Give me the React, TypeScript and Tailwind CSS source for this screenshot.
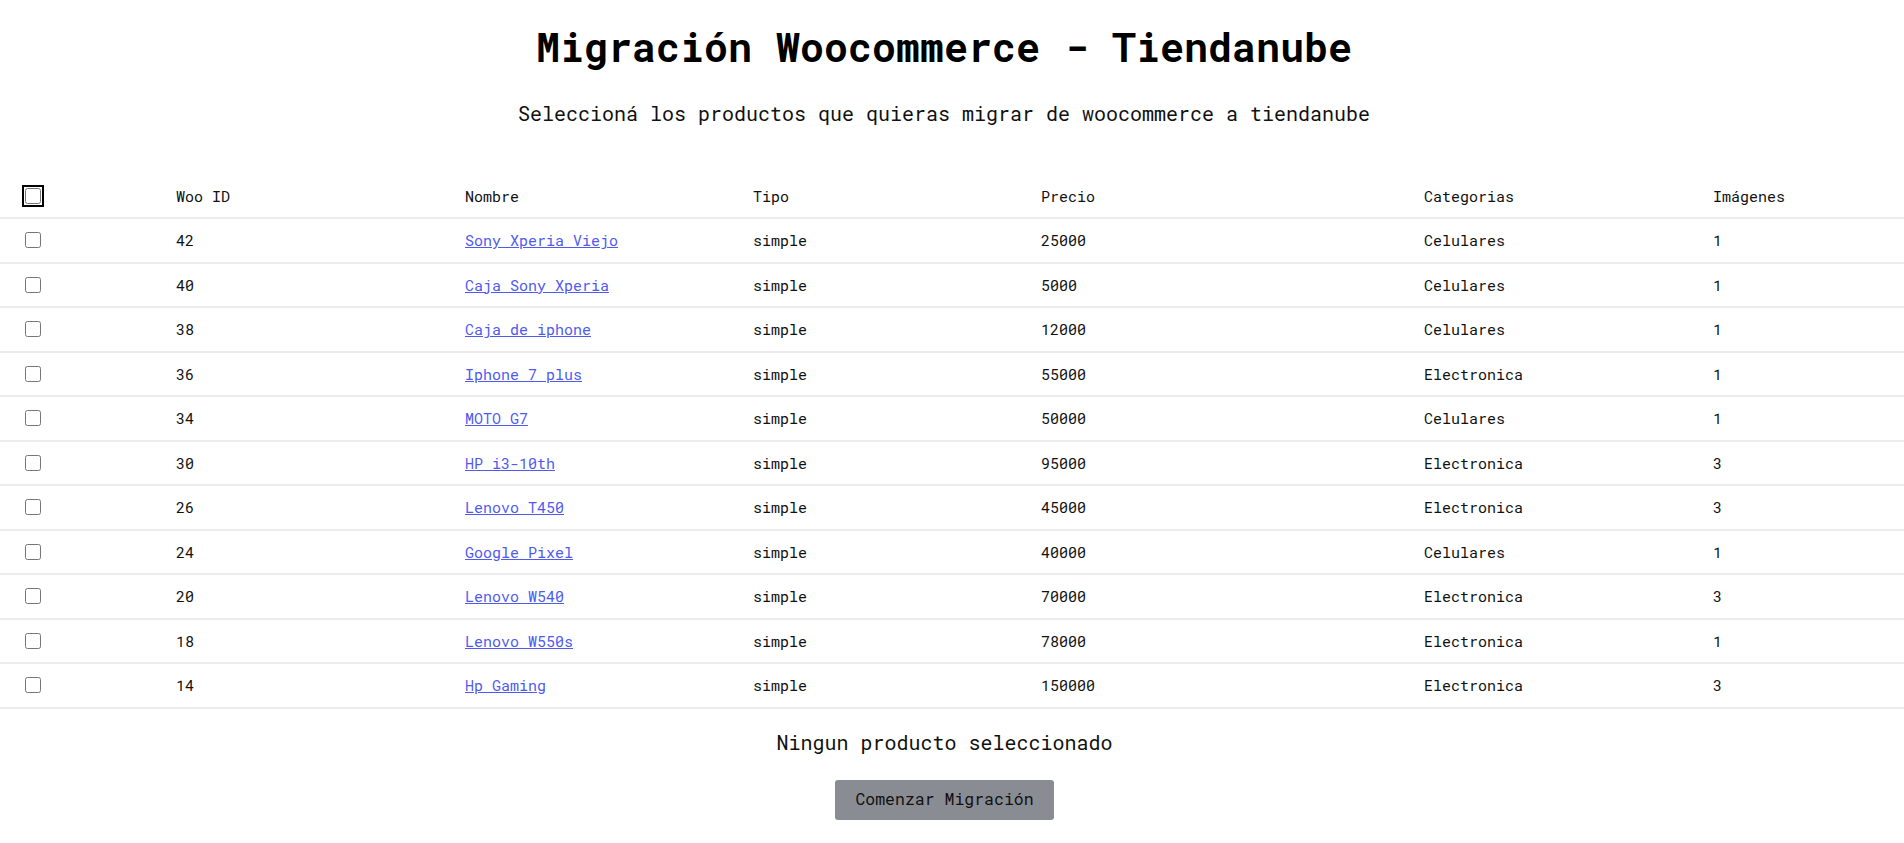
import * as React from "react";

interface Product {
  id: number;
  name: string;
  type: string;
  price: number;
  category: string;
  images: number;
}

const PRODUCTS: Product[] = [
  { id: 42, name: "Sony Xperia Viejo", type: "simple", price: 25000, category: "Celulares", images: 1 },
  { id: 40, name: "Caja Sony Xperia", type: "simple", price: 5000, category: "Celulares", images: 1 },
  { id: 38, name: "Caja de iphone", type: "simple", price: 12000, category: "Celulares", images: 1 },
  { id: 36, name: "Iphone 7 plus", type: "simple", price: 55000, category: "Electronica", images: 1 },
  { id: 34, name: "MOTO G7", type: "simple", price: 50000, category: "Celulares", images: 1 },
  { id: 30, name: "HP i3-10th", type: "simple", price: 95000, category: "Electronica", images: 3 },
  { id: 26, name: "Lenovo T450", type: "simple", price: 45000, category: "Electronica", images: 3 },
  { id: 24, name: "Google Pixel", type: "simple", price: 40000, category: "Celulares", images: 1 },
  { id: 20, name: "Lenovo W540", type: "simple", price: 70000, category: "Electronica", images: 3 },
  { id: 18, name: "Lenovo W550s", type: "simple", price: 78000, category: "Electronica", images: 1 },
  { id: 14, name: "Hp Gaming", type: "simple", price: 150000, category: "Electronica", images: 3 },
];

const ROW =
  "grid grid-cols-[151px_289px_288px_288px_383px_289px_1fr] items-center h-[44.5px] border-b-2 border-[#ececec] [&>*]:pl-[25px]";

export default function App() {
  const [selected, setSelected] = React.useState<number[]>([]);
  const allSelected = selected.length === PRODUCTS.length;

  const toggle = (id: number) =>
    setSelected((prev) => (prev.includes(id) ? prev.filter((x) => x !== id) : [...prev, id]));

  return (
    <div className="min-h-screen bg-white text-[#111] font-['Roboto_Mono','DejaVu_Sans_Mono','Liberation_Mono',monospace] pt-[22px]">
      <div className="flex flex-col items-center pr-[16px]">
        <h1 className="text-[40px] leading-[50px] font-bold text-black">Migración Woocommerce - Tiendanube</h1>
        <p className="mt-[27px] text-[20px] leading-[28px]">
          Seleccioná los productos que quieras migrar de woocommerce a tiendanube
        </p>
      </div>

      {/* Tabla de productos */}
      <div className="w-full mt-[47.5px] text-[15px]">
        <div className={ROW}>
          <div className="flex items-center">
            <input
              type="checkbox"
              checked={allSelected}
              onChange={() => setSelected(allSelected ? [] : PRODUCTS.map((p) => p.id))}
              className="size-4 rounded-[3px] outline-2 outline-offset-1 outline-black"
            />
          </div>
          <div>Woo ID</div>
          <div>Nombre</div>
          <div>Tipo</div>
          <div>Precio</div>
          <div>Categorias</div>
          <div>Imágenes</div>
        </div>
        {PRODUCTS.map((p) => (
          <div key={p.id} className={ROW}>
            <div className="flex items-center">
              <input
                type="checkbox"
                checked={selected.includes(p.id)}
                onChange={() => toggle(p.id)}
                className="size-4"
              />
            </div>
            <div>{p.id}</div>
            <div>
              <a href="#" className="text-[#4f5af0] underline">
                {p.name}
              </a>
            </div>
            <div>{p.type}</div>
            <div>{p.price}</div>
            <div>{p.category}</div>
            <div>{p.images}</div>
          </div>
        ))}
      </div>

      <div className="flex flex-col items-center pr-[15px]">
        <p className="mt-[19px] text-[20px] leading-[28px]">
          {selected.length === 0
            ? "Ningun producto seleccionado"
            : `${selected.length} producto${selected.length > 1 ? "s" : ""} seleccionado${selected.length > 1 ? "s" : ""}`}
        </p>
        <button
          type="button"
          disabled={selected.length === 0}
          className="mt-[24px] h-10 px-5 rounded-[3px] bg-[#8a8c94] text-[16.5px] text-[#111]"
        >
          Comenzar Migración
        </button>
      </div>
    </div>
  );
}
